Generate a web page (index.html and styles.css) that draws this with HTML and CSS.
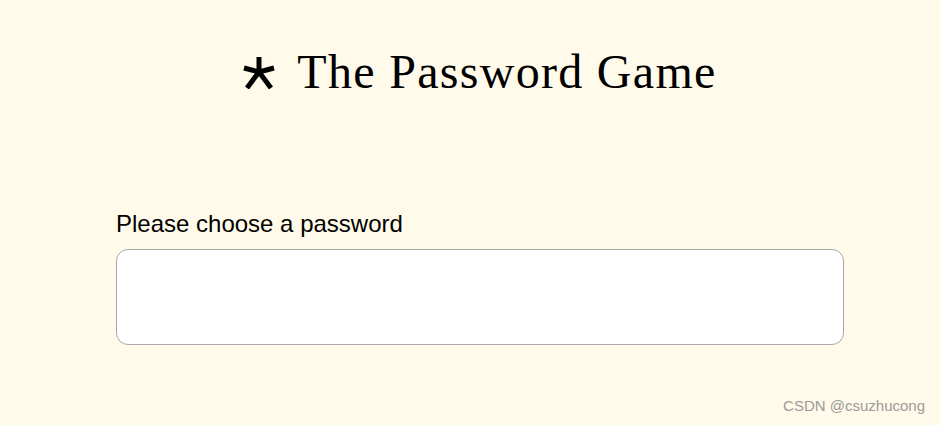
FILE: index.html
```html
<html><head>
  <title>The Password Game</title>
  <link rel="stylesheet" href="styles.css">
</head>
<body>
  <div class="game">
    <h1 class="title">
      <svg class="star" width="32" height="32" viewBox="0 0 32 32">
        <g stroke="#000" stroke-width="5">
          <line x1="16" y1="0" x2="16" y2="15"/>
          <line x1="1" y1="11" x2="16" y2="15"/>
          <line x1="31" y1="11" x2="16" y2="15"/>
          <line x1="4" y1="31" x2="16" y2="15"/>
          <line x1="28" y1="31" x2="16" y2="15"/>
        </g>
      </svg>
      <span>The Password Game</span>
    </h1>

    <div class="password-box">
      <label for="pw">Please choose a password</label>
      <div class="pw-field" id="pw" contenteditable="true"></div>
    </div>
  </div>

  <div class="watermark">CSDN @csuzhucong</div>
</body></html>
```

FILE: styles.css
```css
* {
  margin: 0;
  padding: 0;
  box-sizing: border-box;
}

body {
  background: #fffae9;
  width: 940px;
  height: 425px;
  overflow: hidden;
  position: relative;
  font-family: 'Liberation Sans', Arial, sans-serif;
}

.game {
  width: 728px;
  margin-left: 116px;
  padding-top: 44px;
}

.title {
  display: flex;
  align-items: center;
  justify-content: center;
  gap: 22px;
  font-family: 'Liberation Serif', 'Times New Roman', serif;
  font-weight: normal;
  font-size: 48px;
  letter-spacing: 1.3px;
  line-height: 56px;
  color: #000;
}

.star {
  flex: none;
  margin-top: 2px;
}

.password-box {
  margin-top: 110px;
}

.password-box label {
  display: block;
  font-size: 24px;
  line-height: 28px;
  color: #000;
  margin-bottom: 11px;
}

.pw-field {
  height: 96px;
  background: #fff;
  border: 1px solid #a8a8a8;
  border-radius: 12px;
  outline: none;
}

.watermark {
  position: absolute;
  right: 15px;
  bottom: 11px;
  font-size: 15px;
  color: #9a9a9a;
}
```
